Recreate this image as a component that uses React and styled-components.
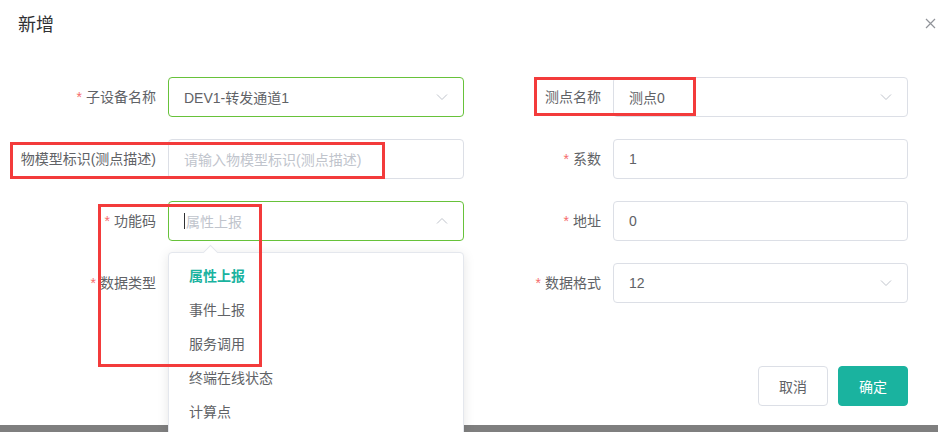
import React from 'react';
import styled, { createGlobalStyle } from 'styled-components';

const GlobalStyle = createGlobalStyle`
  html, body {
    margin: 0;
    height: 432px;
    overflow: hidden;
    background: #7f7f7f;
  }
  * {
    box-sizing: border-box;
  }
  body {
    font-family: "Liberation Sans", "Noto Sans CJK SC", sans-serif;
    -webkit-font-smoothing: antialiased;
  }
`;

const TEAL = '#1ab39f';

const Dialog = styled.div`
  position: relative;
  height: 425px;
  background: #fff;
`;
const Header = styled.div`
  display: flex;
  align-items: center;
  justify-content: space-between;
  padding: 13px 0 0 18px;
`;
const Title = styled.span`
  font-size: 18px;
  line-height: 24px;
  color: #303133;
`;
const Close = styled.span`
  display: flex;
  width: 16px;
  height: 16px;
  align-items: center;
  justify-content: center;
  margin-top: -4px;
`;
const Form = styled.div`
  display: grid;
  grid-template-columns: 1fr 1fr;
  row-gap: 22px;
  padding: 40px 30px 0 20px;
`;
const Item = styled.div`
  display: flex;
  align-items: center;
  height: 40px;
`;
const Label = styled.label`
  width: ${(p) => p.$w || 148}px;
  padding-right: 12px;
  text-align: right;
  font-size: 14px;
  line-height: 20px;
  color: #606266;
  white-space: nowrap;
  &::before {
    content: ${(p) => (p.$req ? '"*"' : 'none')};
    color: #f56c6c;
    margin-right: 4px;
  }
`;
const Field = styled.div`
  position: relative;
  flex: 1;
  display: flex;
  align-items: center;
  height: 40px;
  padding: 0 15px;
  border: 1px solid ${(p) => (p.$ok ? '#67c23a' : '#dcdfe6')};
  border-radius: 4px;
  font-size: 14px;
  color: ${(p) => (p.$ph ? '#c0c4cc' : '#606266')};
`;
const Text = styled.span`
  flex: 1;
  white-space: nowrap;
`;
const Caret = styled.span`
  width: 1px;
  height: 16px;
  background: #303133;
  margin-right: 1px;
`;
const Menu = styled.ul`
  position: absolute;
  top: calc(100% + 12px);
  left: -1px;
  right: -1px;
  margin: 0;
  padding: 6px 0;
  list-style: none;
  background: #fff;
  border: 1px solid #e4e7ed;
  border-radius: 4px;
  box-shadow: 0 2px 12px rgba(0, 0, 0, 0.1);
  z-index: 5;
  &::before {
    content: '';
    position: absolute;
    top: -6px;
    left: 36px;
    width: 10px;
    height: 10px;
    background: #fff;
    border-left: 1px solid #e4e7ed;
    border-top: 1px solid #e4e7ed;
    transform: rotate(45deg);
  }
`;
const Option = styled.li`
  height: 34px;
  line-height: 34px;
  padding: 0 20px;
  font-size: 14px;
  color: ${(p) => (p.$active ? TEAL : '#606266')};
  font-weight: ${(p) => (p.$active ? 700 : 400)};
`;
const Footer = styled.div`
  display: flex;
  justify-content: flex-end;
  gap: 10px;
  padding: 63px 30px 0;
`;
const Button = styled.button`
  width: 70px;
  height: 40px;
  border-radius: 4px;
  font-family: inherit;
  font-size: 14px;
  border: 1px solid ${(p) => (p.$primary ? TEAL : '#dcdfe6')};
  background: ${(p) => (p.$primary ? TEAL : '#fff')};
  color: ${(p) => (p.$primary ? '#fff' : '#606266')};
`;
const Mark = styled.div`
  position: absolute;
  left: ${(p) => p.$x}px;
  top: ${(p) => p.$y}px;
  width: ${(p) => p.$w}px;
  height: ${(p) => p.$h}px;
  border: 3px solid #f33b3b;
  pointer-events: none;
  z-index: 10;
`;

const Chevron = ({ up }) => (
  <svg width="12" height="12" viewBox="0 0 12 12">
    <polyline
      points={up ? '1,8.5 6,3.5 11,8.5' : '1,3.5 6,8.5 11,3.5'}
      fill="none"
      stroke="#c0c4cc"
      strokeWidth="1"
    />
  </svg>
);

const options = ['属性上报', '事件上报', '服务调用', '终端在线状态', '计算点'];

export default function App() {
  return (
    <>
      <GlobalStyle />
      <Dialog>
        <Header>
          <Title>新增</Title>
          <Close>
            <svg width="11" height="11" viewBox="0 0 11 11">
              <path d="M1 1L10 10M10 1L1 10" stroke="#909399" strokeWidth="1.2" />
            </svg>
          </Close>
        </Header>
        <Form>
          <Item>
            <Label $req>子设备名称</Label>
            <Field $ok>
              <Text>DEV1-转发通道1</Text>
              <Chevron />
            </Field>
          </Item>
          <Item>
            <Label $w={149}>测点名称</Label>
            <Field>
              <Text>测点0</Text>
              <Chevron />
            </Field>
          </Item>
          <Item>
            <Label>物模型标识(测点描述)</Label>
            <Field $ph>
              <Text>请输入物模型标识(测点描述)</Text>
            </Field>
          </Item>
          <Item>
            <Label $req $w={149}>系数</Label>
            <Field>
              <Text>1</Text>
            </Field>
          </Item>
          <Item>
            <Label $req>功能码</Label>
            <Field $ok $ph>
              <Caret />
              <Text>属性上报</Text>
              <Chevron up />
              <Menu>
                {options.map((o, i) => (
                  <Option key={o} $active={i === 0}>
                    {o}
                  </Option>
                ))}
              </Menu>
            </Field>
          </Item>
          <Item>
            <Label $req $w={149}>地址</Label>
            <Field>
              <Text>0</Text>
            </Field>
          </Item>
          <Item>
            <Label $req>数据类型</Label>
            <Field>
              <Text />
              <Chevron />
            </Field>
          </Item>
          <Item>
            <Label $req $w={149}>数据格式</Label>
            <Field>
              <Text>12</Text>
              <Chevron />
            </Field>
          </Item>
        </Form>
        <Footer>
          <Button>取消</Button>
          <Button $primary>确定</Button>
        </Footer>
        <Mark $x={534} $y={77} $w={162} $h={39} />
        <Mark $x={10} $y={142} $w={375} $h={37} />
        <Mark $x={98} $y={204} $w={164} $h={163} />
      </Dialog>
    </>
  );
}
